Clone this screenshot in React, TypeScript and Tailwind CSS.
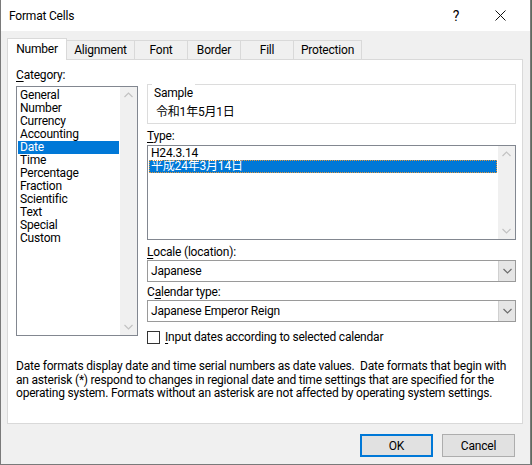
import React from 'react';

// Excel "Format Cells" dialog, Number tab with the Date category picked.

const CATEGORIES = ['General', 'Number', 'Currency', 'Accounting', 'Date', 'Time', 'Percentage', 'Fraction', 'Scientific', 'Text', 'Special', 'Custom'];
const TYPES = ['H24.3.14', '平成24年3月14日'];
const TABS = [
  { label: 'Alignment', w: 'w-[68px]' },
  { label: 'Font', w: 'w-[53px]' },
  { label: 'Border', w: 'w-[53px]' },
  { label: 'Fill', w: 'w-[53px]' },
  { label: 'Protection', w: 'w-[68px]' },
];

function Chevron({ up, color = '#c2c2c2' }: { up?: boolean; color?: string }) {
  return (
    <svg width="9" height="6" viewBox="0 0 9 6" fill="none">
      <polyline points={up ? '0.5,5 4.5,1 8.5,5' : '0.5,1 4.5,5 8.5,1'} stroke={color} strokeWidth="1.2" />
    </svg>
  );
}

function ScrollTrack() {
  return (
    <div className="flex w-[17px] flex-col items-center justify-between bg-[#f0f0f0] py-[5px]">
      <Chevron up />
      <Chevron />
    </div>
  );
}

function Select({ value }: { value: string }) {
  return (
    <div className="mt-px flex h-[22px] border border-[#9a9a9a] bg-white">
      <div className="flex flex-1 items-center pl-[3px]">{value}</div>
      <div className="flex w-[17px] items-center justify-center border-l border-[#d0d0d0] bg-[#e5e5e5]">
        <Chevron color="#6b6b6b" />
      </div>
    </div>
  );
}

export default function App() {
  return (
    <div className="h-[465px] w-[532px] bg-[#5f6a5f] font-[family-name:Roboto,'Noto_Sans_CJK_JP',sans-serif] text-[12px] leading-[14px] tracking-[-0.2px] text-black">
      <div className="flex h-[465px] w-[531px] flex-col border-x border-b border-[#7a7a7a] bg-[#f0f0f0]">
        {/* title bar */}
        <div className="flex h-[31px] items-center bg-white pl-[8px] pr-[8px]">
          <span>Format Cells</span>
          <span className="ml-auto w-[44px] text-center text-[14px]">?</span>
          <span className="flex w-[44px] justify-center">
            <svg width="11" height="11" viewBox="0 0 11 11">
              <path d="M0.5 0.5 L10.5 10.5 M10.5 0.5 L0.5 10.5" stroke="#111" strokeWidth="1" />
            </svg>
          </span>
        </div>

        {/* tabs */}
        <div className="relative z-10 -mb-px mt-[7px] flex h-[22px] items-end pl-[6px]">
          <div className="flex h-[22px] w-[60px] items-center justify-center border-x border-t border-[#d9d9d9] bg-white pb-px">Number</div>
          {TABS.map((t) => (
            <div key={t.label} className={`mb-px flex h-[19px] items-center justify-center border-r border-t border-[#d9d9d9] ${t.w}`}>
              {t.label}
            </div>
          ))}
        </div>

        {/* tab panel */}
        <div className="ml-[6px] flex h-[365px] w-[516px] flex-col border border-[#d9d9d9] bg-white pl-[8px] pt-[8px]">
          <div className="flex gap-[9px]">
            <div className="w-[122px]">
              <div className="mb-[4px]"><u className="underline-offset-2">C</u>ategory:</div>
              <div className="flex h-[250px] border border-[#828790]">
                <div className="flex-1 p-px pt-[2px] leading-[13px]">
                  {CATEGORIES.map((c) => (
                    <div key={c} className={`h-[13px] pl-[2px] ${c === 'Date' ? 'bg-[#0078d7] text-white' : ''}`}>{c}</div>
                  ))}
                </div>
                <ScrollTrack />
              </div>
            </div>

            <div className="mt-[16px] w-[369px]">
              <div className="relative h-[40px] border border-[#dcdcdc] pl-[8px] pt-[20px]">
                <span className="absolute -top-px left-[4px] bg-white px-[2px] pt-[2px]">Sample</span>
                <div>令和1年5月1日</div>
              </div>

              <div className="mt-[5px]"><u className="underline-offset-2">T</u>ype:</div>
              <div className="mt-[2px] flex h-[95px] border border-[#828790]">
                <div className="flex-1 p-px leading-[13px]">
                  {TYPES.map((t, i) => (
                    <div
                      key={t}
                      className={`h-[13px] pl-[2px] ${i === 1 ? 'bg-[#0078d7] text-white outline-1 -outline-offset-1 outline-dotted outline-[#e0963c]' : ''}`}
                    >
                      {t}
                    </div>
                  ))}
                </div>
                <ScrollTrack />
              </div>

              <div className="mt-[5px]"><u className="underline-offset-2">L</u>ocale (location):</div>
              <Select value="Japanese" />

              <div className="mt-[3px]">C<u className="underline-offset-2">a</u>lendar type:</div>
              <Select value="Japanese Emperor Reign" />

              <div className="mt-[8px] flex items-center gap-[5px]">
                <div className="h-[13px] w-[13px] border border-[#333] bg-white" />
                <span><u className="underline-offset-2">I</u>nput dates according to selected calendar</span>
              </div>
            </div>
          </div>

          <p className="mt-[16px] whitespace-nowrap leading-[13.5px]">
            Date formats display date and time serial numbers as date values.&nbsp; Date formats that begin with
            <br />
            an asterisk (*) respond to changes in regional date and time settings that are specified for the
            <br />
            operating system. Formats without an asterisk are not affected by operating system settings.
          </p>
        </div>

        {/* buttons */}
        <div className="mt-[10px] flex justify-end gap-[9px] pr-[15px]">
          <button className="h-[23px] w-[73px] border-2 border-[#0078d7] bg-[#e1e1e1]">OK</button>
          <button className="h-[23px] w-[73px] border border-[#adadad] bg-[#e1e1e1]">Cancel</button>
        </div>
      </div>
    </div>
  );
}
